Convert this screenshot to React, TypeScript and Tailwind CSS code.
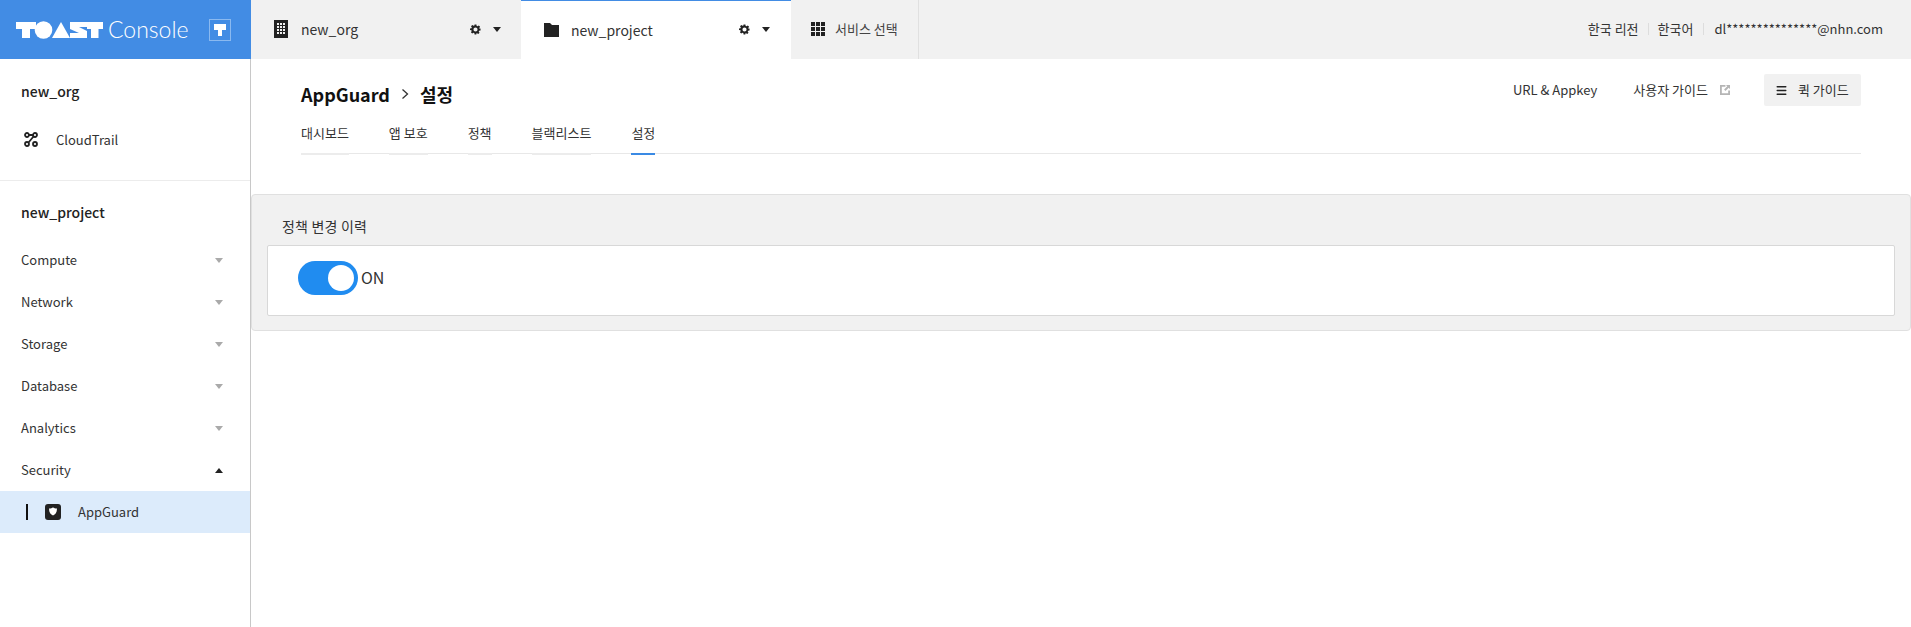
import React from 'react';
import { Menu } from 'lucide-react';

const font = "font-['Noto_Sans_CJK_KR','Noto_Sans',sans-serif]";

const Caret = ({ up = false, className = '' }: { up?: boolean; className?: string }) => (
  <svg width="8" height="5" viewBox="0 0 10 6" preserveAspectRatio="none" className={className}>
    <path d={up ? 'M0 6 L5 0 L10 6 Z' : 'M0 0 L10 0 L5 6 Z'} fill="currentColor" />
  </svg>
);

const GearCaret = () => (
  <div className="flex items-center text-[#222]">
    <svg width="11" height="11" viewBox="0 0 24 24">
      <path
        fill="currentColor"
        fillRule="evenodd"
        d="M10 1h4l.6 3.200 1.900.8 2.700-1.800 2.800 2.800-1.800 2.700.8 1.900L23 10v4l-3.200.6-.8 1.900 1.800 2.700-2.800 2.800-2.700-1.800-1.900.8L14 23h-4l-.6-3.200-1.900-.8-2.700 1.800L2 18l1.800-2.700-.8-1.900L0 13v-3l3.200-.6.8-1.900L2.200 4.800 5 2l2.700 1.800 1.900-.8L10 1zM12 7.500a4.500 4.500 0 100 9 4.500 4.500 0 000-9z"
      />
    </svg>
    <Caret className="ml-[12px] w-[8px]" />
  </div>
);

const ToastLogo = () => (
  <svg width="87" height="18" viewBox="0 0 87 18" className="text-white shrink-0">
    <path fill="currentColor" d="M0 1h20v7h-6v9H6V8H0z" />
    <circle cx="27.500" cy="9" r="8.800" fill="currentColor" />
    <path fill="currentColor" d="M36 17 L45 1 L54 17 Z" />
    <path fill="currentColor" d="M55 1h16v5h-8l8 4v7H54v-5h9l-9-4V1z" />
    <path fill="currentColor" d="M71 1h16v7h-4.500v9H75V8h-4z" />
  </svg>
);

const Tab = ({ label, active = false }: { label: string; active?: boolean }) => (
  <div className={`h-[38px] border-b-2 ${active ? 'border-[#3a8ae4]' : 'border-[#ececec]'}`}>
    <span className="block text-[13px] leading-[32px] text-[#333]">{label}</span>
  </div>
);

const NavRow = ({ label, open = false }: { label: string; open?: boolean }) => (
  <div className="h-[42px] pl-[21px] pr-[27px] flex items-center justify-between">
    <span className="text-[13px] text-[#333]">{label}</span>
    <Caret up={open} className={open ? 'text-[#222]' : 'text-[#aaa]'} />
  </div>
);

export default function App() {
  const navItems = ['Compute', 'Network', 'Storage', 'Database', 'Analytics'];

  return (
    <div className={`${font} h-[627px] w-[1911px] overflow-hidden bg-white flex flex-col`}>
      {/* Top bar */}
      <header className="h-[59px] flex bg-[#f1f1f1] shrink-0">
        <div className="w-[251px] bg-[#428ce4] flex items-center pl-[16px] pr-[20px]">
          <ToastLogo />
          <span className="ml-[5px] font-['Lato',sans-serif] text-[23px] font-light text-white leading-none">Console</span>
          <div className="ml-auto w-[22px] h-[22px] border border-[#8ab9f0] flex items-center justify-center">
            <svg width="12" height="12" viewBox="0 0 12 12">
              <path fill="#fff" d="M0 0h12v6H8v6H4V6H0z" />
            </svg>
          </div>
        </div>

        <div className="w-[270px] flex items-center pl-[23px] pr-[20px]">
          <svg width="14" height="18" viewBox="0 0 14 18" className="-mt-[1px]">
            <path
              fill="#222"
              fillRule="evenodd"
              d="M0 0h14v18H0zM3 3v2h2V3zM6 3v2h2V3zM9 3v2h2V3zM3 6v2h2V6zM6 6v2h2V6zM9 6v2h2V6zM3 9v2h2V9zM6 9v2h2V9zM9 9v2h2V9zM3 12v2h2v-2zM6 12v2h2v-2zM9 12v2h2v-2z"
            />
          </svg>
          <span className="ml-[13px] text-[14px] text-[#333]">new_org</span>
          <div className="ml-auto -mt-[1px]"><GearCaret /></div>
        </div>

        <div className="w-[270px] bg-white border-t-[1px] border-[#428ce4] flex items-center pl-[23px] pr-[21px]">
          <svg width="15" height="14" viewBox="0 0 15 14">
            <path fill="#222" d="M0 0h6l2 2h7v12H0z" />
          </svg>
          <span className="ml-[12px] text-[14px] text-[#333]">new_project</span>
          <div className="ml-auto -mt-[1px]"><GearCaret /></div>
        </div>

        <div className="w-[128px] border-r border-[#e0e0e0] flex items-center pl-[20px]">
          <svg width="14" height="14" viewBox="0 0 14 14" className="-mt-[1px]">
            <path
              fill="#222"
              d="M0 0h4v4H0zM5 0h4v4H5zM10 0h4v4h-4zM0 5h4v4H0zM5 5h4v4H5zM10 5h4v4h-4zM0 10h4v4H0zM5 10h4v4H5zM10 10h4v4h-4z"
            />
          </svg>
          <span className="ml-[10px] text-[13px] text-[#444] -mt-[1px]">서비스 선택</span>
        </div>

        <div className="ml-auto flex items-center pr-[28px] text-[13px] text-[#333] -mt-[1px]">
          <span>한국 리전</span>
          <span className="mx-[9px] h-[12px] w-px bg-[#ddd]" />
          <span>한국어</span>
          <span className="mx-[10px] h-[12px] w-px bg-[#ddd]" />
          <span>dl***************@nhn.com</span>
        </div>
      </header>

      <div className="flex-1 flex min-h-0">
        {/* Sidebar */}
        <aside className="w-[251px] shrink-0 border-r border-[#c8c8c8]">
          <div className="h-[122px] border-b border-[#ececec] pt-[20px]">
            <div className="pl-[21px] text-[14px] font-medium leading-[24px] text-[#222]">new_org</div>
            <div className="mt-[27px] pl-[24px] flex items-center">
              <svg width="14" height="15" viewBox="0 0 14 15" fill="none" stroke="#222" strokeWidth="1.800">
                <circle cx="3" cy="3" r="2" />
                <circle cx="11" cy="3" r="2" />
                <circle cx="3" cy="12" r="2" />
                <circle cx="11" cy="12" r="2" />
                <path d="M5 3 H9 M4.500 10.500 L9.500 4.500" />
              </svg>
              <span className="ml-[18px] text-[13px] text-[#333]">CloudTrail</span>
            </div>
          </div>
          <div className="pl-[21px] pt-[19px] pb-[15px] text-[14px] font-medium leading-[24px] text-[#222]">new_project</div>
          {navItems.map((item) => (
            <NavRow key={item} label={item} />
          ))}
          <NavRow label="Security" open />
          <div className="h-[42px] bg-[#dcebfb] flex items-center pl-[26px]">
            <span className="w-[2px] h-[16px] bg-[#111]" />
            <svg width="16" height="16" viewBox="0 0 16 16" className="ml-[17px]">
              <rect width="16" height="16" rx="3" fill="#222" />
              <path fill="#fff" d="M4 4.500 C6 4.500 7 4 8 3.500 C9 4 10 4.500 12 4.500 C12 8.500 10.300 10.500 8 11.500 C5.700 10.500 4 8.500 4 4.500 Z" />
            </svg>
            <span className="ml-[17px] text-[13px] text-[#333]">AppGuard</span>
          </div>
        </aside>

        {/* Main */}
        <main className="flex-1 min-w-0 pt-[17px]">
          <div className="pl-[50px] pr-[50px]">
            <div className="flex items-start justify-between h-[36px]">
              <div className="flex items-center h-[36px] text-[18px] font-bold text-[#111]">
                <span>AppGuard</span>
                <svg width="8" height="12" viewBox="0 0 8 12" className="mx-[11px]" fill="none" stroke="#333" strokeWidth="1.300">
                  <path d="M1.500 1.500 L6.500 6 L1.500 10.500" />
                </svg>
                <span>설정</span>
              </div>
              <div className="flex items-center text-[13px] text-[#333] -mt-[2px]">
                <span>URL &amp; Appkey</span>
                <span className="ml-[36px]">사용자 가이드</span>
                <svg width="10" height="10" viewBox="0 0 11 11" className="ml-[12px]">
                  <path fill="#b5b5b5" d="M0 0h6v2H2v7h7V6h2v5H0z" />
                  <path fill="#b5b5b5" d="M6.500 0H11v4.500L9.500 3 6 6.500 4.500 5 8 1.500z" />
                </svg>
                <div className="ml-[34px] w-[97px] h-[32px] rounded-[2px] bg-[#f1f1f1] flex items-center pl-[11px]">
                  <Menu size={13} strokeWidth={2.500} className="text-[#222]" />
                  <span className="ml-[10px]">퀵 가이드</span>
                </div>
              </div>
            </div>
            <div className="mt-[5px] flex gap-[40px] border-b border-[#e8e8e8] h-[37px]">
              <Tab label="대시보드" />
              <Tab label="앱 보호" />
              <Tab label="정책" />
              <Tab label="블랙리스트" />
              <Tab label="설정" active />
            </div>
          </div>

          <section className="mt-[40px] h-[137px] bg-[#f1f1f1] border border-[#e0e0e0] rounded-[4px] px-[15px] pt-[21px]">
            <div className="pl-[15px] text-[14px] tracking-[0.2px] leading-[20px] text-[#333]">정책 변경 이력</div>
            <div className="mt-[9px] h-[71px] bg-white border border-[#d8d8d8] rounded-[2px] pl-[30px] pt-[15px] flex items-start">
              <div className="w-[60px] h-[34px] rounded-full bg-[#208cf0] flex items-center justify-end pr-[4px]">
                <span className="w-[26px] h-[26px] rounded-full bg-white" />
              </div>
              <span className="ml-[3px] text-[16px] leading-[33px] text-[#333]">ON</span>
            </div>
          </section>
        </main>
      </div>
    </div>
  );
}
